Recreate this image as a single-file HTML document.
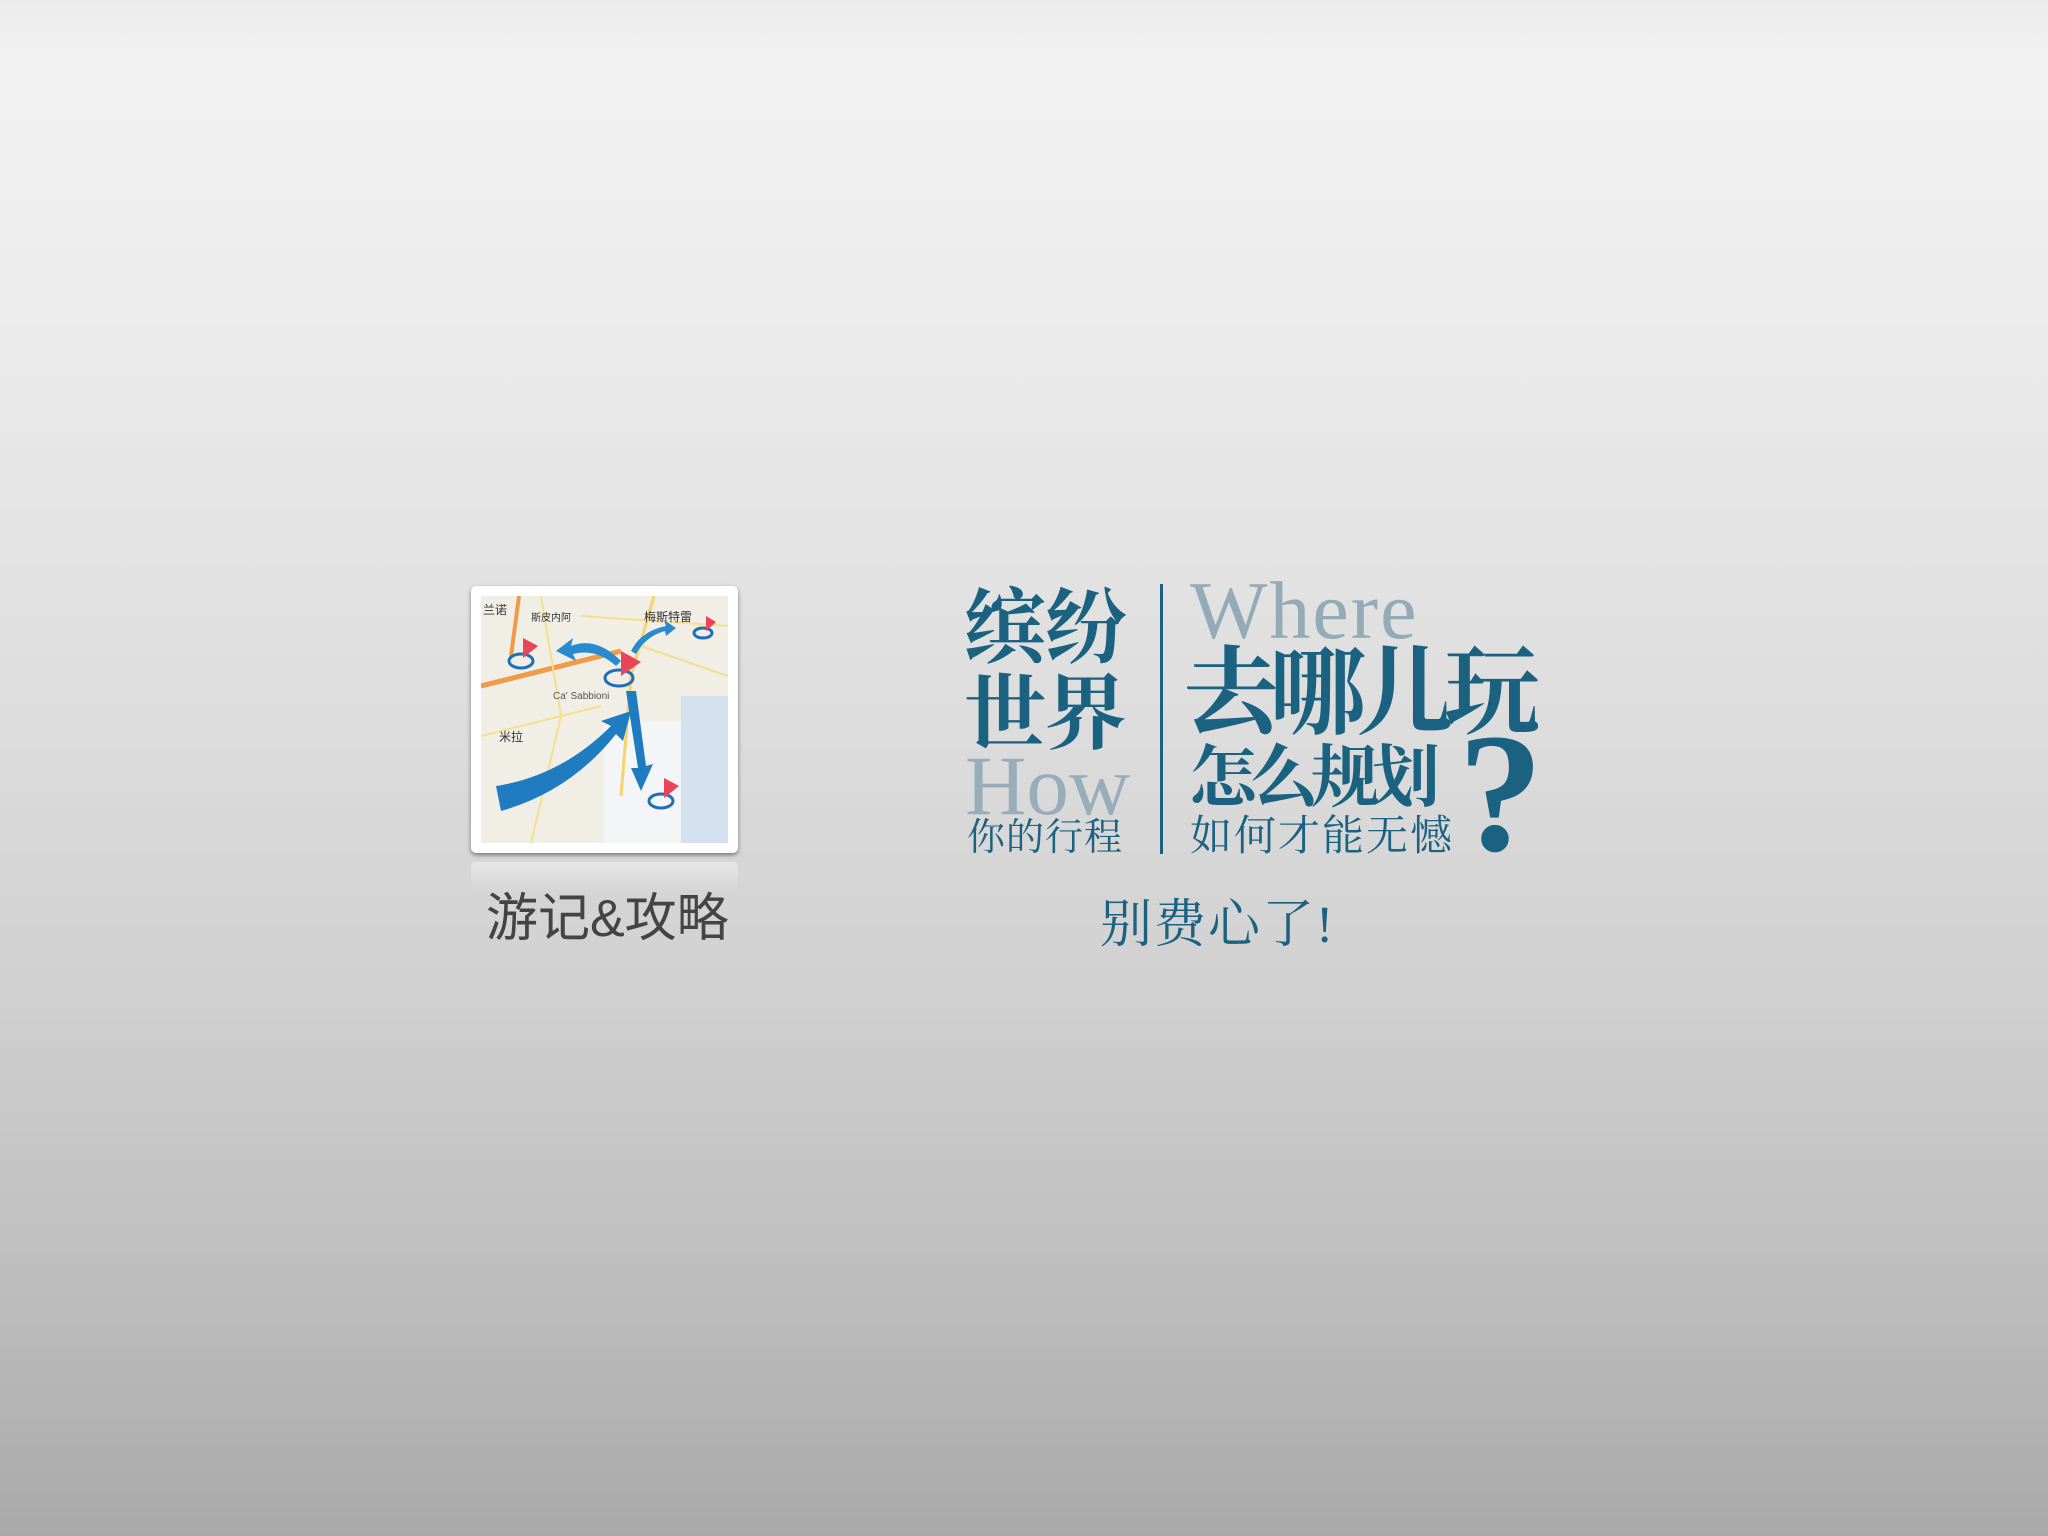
<!DOCTYPE html>
<html><head><meta charset="utf-8"><style>
html,body{margin:0;padding:0}
body{width:2048px;height:1536px;position:relative;overflow:hidden;
background:linear-gradient(180deg,#ebebeb 0%,#f2f2f2 4%,#ececec 20%,#dedede 45%,#d0d0d0 65%,#bcbcbc 85%,#a9a9a9 100%);
font-family:"Liberation Serif","Noto Serif CJK SC",serif;}
.t{position:absolute;white-space:nowrap;line-height:1;color:#1b6180}
.b{font-weight:bold}
</style></head><body>
<div style="position:absolute;left:471px;top:586px;width:267px;height:267px;background:#fff;border-radius:5px;box-shadow:0 2px 4px rgba(0,0,0,.45)">
<svg style="position:absolute;left:10px;top:10px" width="247" height="247" viewBox="0 0 247 247">
<rect width="247" height="247" fill="#f1eee6"/>
<rect x="123" y="125" width="124" height="122" fill="#f4f5f6"/>
<rect x="200" y="100" width="47" height="147" fill="#d3e0ee"/>
<path d="M0 90 L140 55" stroke="#f19a47" stroke-width="5" fill="none"/>
<path d="M38 0 L30 60" stroke="#f19a47" stroke-width="4" fill="none"/>
<path d="M173 0 L150 80 L140 200" stroke="#f5d56a" stroke-width="3" fill="none"/>
<path d="M0 140 L120 110 M60 0 L80 120 L50 247 M160 50 L247 80 M100 20 L247 30" stroke="#f6df8a" stroke-width="2" fill="none"/>
<text x="2" y="18" font-size="12" font-family="Noto Sans CJK SC,sans-serif" fill="#333">兰诺</text>
<text x="50" y="25" font-size="10" font-family="Noto Sans CJK SC,sans-serif" fill="#333">斯皮内阿</text>
<text x="163" y="25" font-size="12" font-family="Noto Sans CJK SC,sans-serif" fill="#333">梅斯特雷</text>
<text x="72" y="103" font-size="10" font-family="Liberation Sans,sans-serif" fill="#555">Ca' Sabbioni</text>
<text x="18" y="145" font-size="12" font-family="Noto Sans CJK SC,sans-serif" fill="#333">米拉</text>
<path d="M15 190 Q80 180 130 130 L120 125 L150 115 L142 145 L135 138 Q90 195 20 215 Z" fill="#1f7cc0"/>
<path d="M140 65 Q115 40 90 50 L92 42 L75 55 L95 65 L92 58 Q115 52 135 70Z" fill="#2a8ad0"/>
<path d="M145 95 L155 95 L165 170 L172 168 L160 195 L150 172 L157 172 Z" fill="#1f7cc0"/>
<path d="M150 55 Q160 35 185 30 L183 24 L195 32 L185 40 L184 35 Q165 40 155 58Z" fill="#2a8ad0"/>
<g fill="none" stroke="#1f6fb8" stroke-width="3"><ellipse cx="40" cy="65" rx="12" ry="7"/><ellipse cx="138" cy="82" rx="14" ry="8"/><ellipse cx="180" cy="205" rx="12" ry="7"/><ellipse cx="222" cy="37" rx="9" ry="5"/></g>
<g fill="#e8455a"><path d="M42 62 V42 L57 50Z"/><path d="M140 80 V55 L160 66Z"/><path d="M183 202 V182 L198 190Z"/><path d="M225 35 V20 L235 26Z"/></g>
</svg></div>
<div style="position:absolute;left:471px;top:862px;width:267px;height:30px;background:linear-gradient(rgba(255,255,255,.4),rgba(255,255,255,0));border-radius:5px"></div>
<div class="t" style="left:486px;top:893px;font-size:52px;color:#444;font-family:'Liberation Sans','Noto Sans CJK SC',sans-serif">游记&amp;攻略</div>

<div class="t b" style="left:964px;top:588px;font-size:82px;letter-spacing:-1px">缤纷</div>
<div class="t b" style="left:964px;top:674px;font-size:82px;letter-spacing:-1px">世界</div>
<div class="t" style="left:965px;top:744px;font-size:85px;color:#98adb9">How</div>
<div class="t" style="left:967px;top:819px;font-size:38px;letter-spacing:1px">你的行程</div>
<div style="position:absolute;left:1160px;top:584px;width:3px;height:270px;background:#1b6180"></div>
<div class="t" style="left:1190px;top:570px;font-size:82px;color:#94aab6;letter-spacing:2px">Where</div>
<div class="t b" style="left:1183px;top:646px;font-size:96px;letter-spacing:-9px">去哪儿玩</div>
<div class="t b" style="left:1189px;top:744px;font-size:68px;letter-spacing:-7px">怎么规划</div>
<div class="t" style="left:1190px;top:816px;font-size:42px;letter-spacing:2px">如何才能无憾</div>
<div class="t b" style="left:1458px;top:708px;font-size:170px">?</div>
<div class="t" style="left:1100px;top:900px;font-size:52px;letter-spacing:2px">别费心了!</div>
</body></html>
